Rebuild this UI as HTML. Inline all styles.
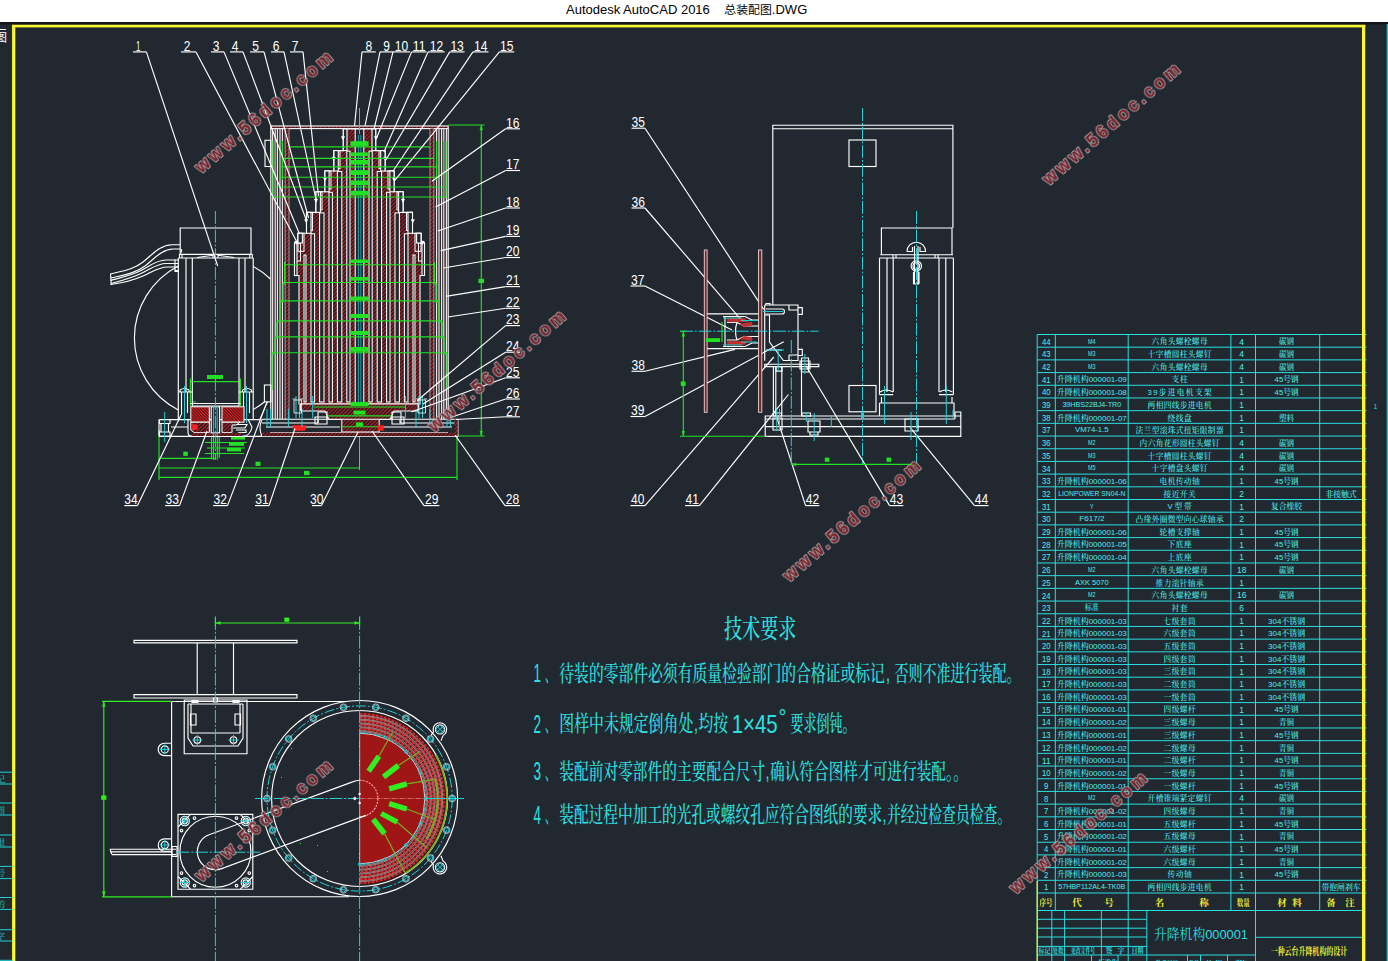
<!DOCTYPE html>
<html lang="zh"><head><meta charset="utf-8"><title>总装配图.DWG</title>
<style>
html,body{margin:0;padding:0;background:#fff;overflow:hidden}
body{width:1388px;height:961px;position:relative;font-family:"Liberation Sans","Noto Sans CJK SC",sans-serif}
#hdr{position:absolute;left:0;top:0;width:1388px;height:22px;background:#fff;color:#000;font-size:13px;line-height:20px;white-space:pre}
#hdr span{position:absolute;left:566px;top:0}
svg{position:absolute;left:0;top:0;display:block}
</style></head><body>
<svg width="1388" height="961" viewBox="0 0 1388 961" font-family="'Liberation Sans','Noto Sans CJK SC',sans-serif">
<defs>
<pattern id="hat" width="2.7" height="2.7" patternUnits="userSpaceOnUse" patternTransform="rotate(-45)"><rect width="2.7" height="2.7" fill="#301a20"/><line x1="0" y1="1.35" x2="2.7" y2="1.35" stroke="#c42626" stroke-width="0.85"/></pattern>
<pattern id="hat2" width="2.2" height="2.2" patternUnits="userSpaceOnUse" patternTransform="rotate(45)"><rect width="2.2" height="2.2" fill="#4a1418"/><line x1="0" y1="1.1" x2="2.2" y2="1.1" stroke="#f02020" stroke-width="1.0"/></pattern>
<pattern id="hat3" width="1.7" height="1.7" patternUnits="userSpaceOnUse" patternTransform="rotate(-45)"><rect width="1.7" height="1.7" fill="#cc1a1a"/><line x1="0" y1="0.85" x2="1.7" y2="0.85" stroke="#5e0e10" stroke-width="0.7"/></pattern>
</defs>
<rect x="0" y="22" width="1388" height="939" fill="#212830"/>
<rect x="0" y="22" width="1388" height="2.5" fill="#12161a"/>
<g fill="#fbf63a" stroke="#3c3c12" stroke-width="0.9" paint-order="stroke"><rect x="12.1" y="24.9" width="1353.1" height="2.3"/><rect x="12.1" y="24.9" width="3.2" height="940"/><rect x="1362" y="24.9" width="3.2" height="940"/></g>
<g fill="#fbf63a"><rect x="12.1" y="24.9" width="1353.1" height="2.3"/></g>
<line x1="1387.3" y1="24.0" x2="1387.3" y2="961.0" stroke="#1fd6d6" stroke-width="1.2" />
<text x="1373.5" y="408.5" font-size="7" fill="#1fd6d6" text-anchor="start" font-family="Liberation Sans" >1</text>
<line x1="0.0" y1="772.2" x2="12.5" y2="772.2" stroke="#1fd6d6" stroke-width="1" />
<line x1="0.0" y1="784.0" x2="12.5" y2="784.0" stroke="#1fd6d6" stroke-width="1" />
<line x1="0.0" y1="803.0" x2="12.5" y2="803.0" stroke="#1fd6d6" stroke-width="1" />
<line x1="0.0" y1="815.0" x2="12.5" y2="815.0" stroke="#1fd6d6" stroke-width="1" />
<line x1="0.0" y1="835.0" x2="12.5" y2="835.0" stroke="#1fd6d6" stroke-width="1" />
<line x1="0.0" y1="847.0" x2="12.5" y2="847.0" stroke="#1fd6d6" stroke-width="1" />
<line x1="0.0" y1="866.4" x2="12.5" y2="866.4" stroke="#1fd6d6" stroke-width="1" />
<line x1="0.0" y1="878.6" x2="12.5" y2="878.6" stroke="#1fd6d6" stroke-width="1" />
<line x1="0.0" y1="897.5" x2="12.5" y2="897.5" stroke="#1fd6d6" stroke-width="1" />
<line x1="0.0" y1="909.4" x2="12.5" y2="909.4" stroke="#1fd6d6" stroke-width="1" />
<line x1="0.0" y1="929.7" x2="12.5" y2="929.7" stroke="#1fd6d6" stroke-width="1" />
<line x1="0.0" y1="941.0" x2="12.5" y2="941.0" stroke="#1fd6d6" stroke-width="1" />
<line x1="0.0" y1="960.3" x2="12.5" y2="960.3" stroke="#1fd6d6" stroke-width="1" />
<text x="-3.0" y="781.5" font-size="8" fill="#1fd6d6" text-anchor="start" font-family="Noto Serif CJK SC, serif" >记</text>
<text x="-3.0" y="812.5" font-size="8" fill="#1fd6d6" text-anchor="start" font-family="Noto Serif CJK SC, serif" >图</text>
<text x="-3.0" y="844.5" font-size="8" fill="#1fd6d6" text-anchor="start" font-family="Noto Serif CJK SC, serif" >限</text>
<text x="-3.0" y="876.1" font-size="8" fill="#1fd6d6" text-anchor="start" font-family="Noto Serif CJK SC, serif" >号</text>
<text x="-3.0" y="906.9" font-size="8" fill="#1fd6d6" text-anchor="start" font-family="Noto Serif CJK SC, serif" >的</text>
<text x="-3.0" y="938.5" font-size="8" fill="#1fd6d6" text-anchor="start" font-family="Noto Serif CJK SC, serif" >字</text>
<text x="-5.0" y="41.5" font-size="12" fill="#fff" text-anchor="start" font-family="Noto Sans CJK SC, sans-serif" >图</text>
<line x1="0.0" y1="29.5" x2="6.0" y2="29.5" stroke="#fff" stroke-width="1" />
<g stroke="#2adfe0" stroke-width="1" fill="none">
<line x1="1037.2" y1="334.50" x2="1366.5" y2="334.50"/>
<line x1="1037.2" y1="347.19" x2="1366.5" y2="347.19"/>
<line x1="1037.2" y1="359.89" x2="1366.5" y2="359.89"/>
<line x1="1037.2" y1="372.58" x2="1366.5" y2="372.58"/>
<line x1="1037.2" y1="385.27" x2="1366.5" y2="385.27"/>
<line x1="1037.2" y1="397.96" x2="1366.5" y2="397.96"/>
<line x1="1037.2" y1="410.66" x2="1366.5" y2="410.66"/>
<line x1="1037.2" y1="423.35" x2="1366.5" y2="423.35"/>
<line x1="1037.2" y1="436.04" x2="1366.5" y2="436.04"/>
<line x1="1037.2" y1="448.74" x2="1366.5" y2="448.74"/>
<line x1="1037.2" y1="461.43" x2="1366.5" y2="461.43"/>
<line x1="1037.2" y1="474.12" x2="1366.5" y2="474.12"/>
<line x1="1037.2" y1="486.82" x2="1366.5" y2="486.82"/>
<line x1="1037.2" y1="499.51" x2="1366.5" y2="499.51"/>
<line x1="1037.2" y1="512.20" x2="1366.5" y2="512.20"/>
<line x1="1037.2" y1="524.89" x2="1366.5" y2="524.89"/>
<line x1="1037.2" y1="537.59" x2="1366.5" y2="537.59"/>
<line x1="1037.2" y1="550.28" x2="1366.5" y2="550.28"/>
<line x1="1037.2" y1="562.97" x2="1366.5" y2="562.97"/>
<line x1="1037.2" y1="575.67" x2="1366.5" y2="575.67"/>
<line x1="1037.2" y1="588.36" x2="1366.5" y2="588.36"/>
<line x1="1037.2" y1="601.05" x2="1366.5" y2="601.05"/>
<line x1="1037.2" y1="613.75" x2="1366.5" y2="613.75"/>
<line x1="1037.2" y1="626.44" x2="1366.5" y2="626.44"/>
<line x1="1037.2" y1="639.13" x2="1366.5" y2="639.13"/>
<line x1="1037.2" y1="651.83" x2="1366.5" y2="651.83"/>
<line x1="1037.2" y1="664.52" x2="1366.5" y2="664.52"/>
<line x1="1037.2" y1="677.21" x2="1366.5" y2="677.21"/>
<line x1="1037.2" y1="689.90" x2="1366.5" y2="689.90"/>
<line x1="1037.2" y1="702.60" x2="1366.5" y2="702.60"/>
<line x1="1037.2" y1="715.29" x2="1366.5" y2="715.29"/>
<line x1="1037.2" y1="727.98" x2="1366.5" y2="727.98"/>
<line x1="1037.2" y1="740.68" x2="1366.5" y2="740.68"/>
<line x1="1037.2" y1="753.37" x2="1366.5" y2="753.37"/>
<line x1="1037.2" y1="766.06" x2="1366.5" y2="766.06"/>
<line x1="1037.2" y1="778.75" x2="1366.5" y2="778.75"/>
<line x1="1037.2" y1="791.45" x2="1366.5" y2="791.45"/>
<line x1="1037.2" y1="804.14" x2="1366.5" y2="804.14"/>
<line x1="1037.2" y1="816.83" x2="1366.5" y2="816.83"/>
<line x1="1037.2" y1="829.53" x2="1366.5" y2="829.53"/>
<line x1="1037.2" y1="842.22" x2="1366.5" y2="842.22"/>
<line x1="1037.2" y1="854.91" x2="1366.5" y2="854.91"/>
<line x1="1037.2" y1="867.61" x2="1366.5" y2="867.61"/>
<line x1="1037.2" y1="880.30" x2="1366.5" y2="880.30"/>
<line x1="1037.2" y1="892.99" x2="1366.5" y2="892.99"/>
<line x1="1037.2" y1="910.5" x2="1362.3" y2="910.5"/>
<line x1="1037.2" y1="334.5" x2="1037.2" y2="910.5"/>
<line x1="1055.3" y1="334.5" x2="1055.3" y2="910.5"/>
<line x1="1128.2" y1="334.5" x2="1128.2" y2="910.5"/>
<line x1="1230.9" y1="334.5" x2="1230.9" y2="910.5"/>
<line x1="1255.5" y1="334.5" x2="1255.5" y2="910.5"/>
<line x1="1319.7" y1="334.5" x2="1319.7" y2="910.5"/>
<line x1="1037.2" y1="910.5" x2="1037.2" y2="961"/>
<line x1="1051.8" y1="910.5" x2="1051.8" y2="961"/>
<line x1="1064.6" y1="910.5" x2="1064.6" y2="961"/>
<line x1="1101.4" y1="910.5" x2="1101.4" y2="961"/>
<line x1="1128.2" y1="910.5" x2="1128.2" y2="961"/>
<line x1="1146.8" y1="910.5" x2="1146.8" y2="961"/>
<line x1="1255.5" y1="910.5" x2="1255.5" y2="961"/>
<line x1="1037.2" y1="919.3" x2="1146.8" y2="919.3"/>
<line x1="1037.2" y1="928.2" x2="1146.8" y2="928.2"/>
<line x1="1037.2" y1="937" x2="1146.8" y2="937"/>
<line x1="1037.2" y1="946.4" x2="1146.8" y2="946.4"/>
<line x1="1037.2" y1="955" x2="1255.5" y2="955"/>
<line x1="1255.5" y1="937.3" x2="1362.3" y2="937.3"/>
<line x1="1187.5" y1="955" x2="1187.5" y2="961"/>
<line x1="1200.5" y1="955" x2="1200.5" y2="961"/>
<line x1="1227.5" y1="955" x2="1227.5" y2="961"/>
<line x1="1091.5" y1="955" x2="1091.5" y2="961"/>
<line x1="1118" y1="955" x2="1118" y2="961"/>
</g>
<path d="M1037.2 881 V961" stroke="#f2f230" stroke-width="1.2" fill="none"/>
<g fill="#4af0f0" font-size="7.7" font-weight="500" text-anchor="middle" style="font-family:'Liberation Sans','Noto Serif CJK SC',serif">
<text x="1046.2" y="344.6" font-size="9.6" textLength="8.6" lengthAdjust="spacingAndGlyphs">44</text>
<text x="1091.8" y="343.5" textLength="7.5" lengthAdjust="spacingAndGlyphs">M4</text>
<text x="1179.6" y="344.3" textLength="56.0" lengthAdjust="spacing">六角头螺栓螺母</text>
<text x="1241.7" y="344.5" font-size="8.4">4</text>
<text x="1286.6" y="344.3" textLength="15" lengthAdjust="spacingAndGlyphs">碳钢</text>
<text x="1046.2" y="357.3" font-size="9.6" textLength="8.6" lengthAdjust="spacingAndGlyphs">43</text>
<text x="1091.8" y="356.2" textLength="7.5" lengthAdjust="spacingAndGlyphs">M3</text>
<text x="1179.6" y="357.0" textLength="64.0" lengthAdjust="spacing">十字槽圆柱头螺钉</text>
<text x="1241.7" y="357.2" font-size="8.4">4</text>
<text x="1286.6" y="357.0" textLength="15" lengthAdjust="spacingAndGlyphs">碳钢</text>
<text x="1046.2" y="370.0" font-size="9.6" textLength="8.6" lengthAdjust="spacingAndGlyphs">42</text>
<text x="1091.8" y="368.9" textLength="7.5" lengthAdjust="spacingAndGlyphs">M3</text>
<text x="1179.6" y="369.7" textLength="56.0" lengthAdjust="spacing">六角头螺栓螺母</text>
<text x="1241.7" y="369.9" font-size="8.4">4</text>
<text x="1286.6" y="369.7" textLength="15" lengthAdjust="spacingAndGlyphs">碳钢</text>
<text x="1046.2" y="382.7" font-size="9.6" textLength="8.6" lengthAdjust="spacingAndGlyphs">41</text>
<text x="1091.8" y="382.4" textLength="70" lengthAdjust="spacingAndGlyphs">升降机构000001-09</text>
<text x="1179.6" y="382.4" textLength="16.0" lengthAdjust="spacing">支柱</text>
<text x="1241.7" y="382.6" font-size="8.4">1</text>
<text x="1286.6" y="382.4" textLength="24" lengthAdjust="spacingAndGlyphs">45号钢</text>
<text x="1046.2" y="395.4" font-size="9.6" textLength="8.6" lengthAdjust="spacingAndGlyphs">40</text>
<text x="1091.8" y="395.1" textLength="70" lengthAdjust="spacingAndGlyphs">升降机构000001-08</text>
<text x="1179.6" y="395.1" textLength="64.0" lengthAdjust="spacing">39步进电机支架</text>
<text x="1241.7" y="395.3" font-size="8.4">1</text>
<text x="1286.6" y="395.1" textLength="24" lengthAdjust="spacingAndGlyphs">45号钢</text>
<text x="1046.2" y="408.1" font-size="9.6" textLength="8.6" lengthAdjust="spacingAndGlyphs">39</text>
<text x="1091.8" y="407.0" textLength="58.8" lengthAdjust="spacingAndGlyphs">39HBS22BJ4-TR0</text>
<text x="1179.6" y="407.8" textLength="64.0" lengthAdjust="spacing">两相四线步进电机</text>
<text x="1241.7" y="408.0" font-size="8.4">1</text>
<text x="1046.2" y="420.8" font-size="9.6" textLength="8.6" lengthAdjust="spacingAndGlyphs">38</text>
<text x="1091.8" y="420.5" textLength="70" lengthAdjust="spacingAndGlyphs">升降机构000001-07</text>
<text x="1179.6" y="420.5" textLength="24.0" lengthAdjust="spacing">绕线盘</text>
<text x="1241.7" y="420.7" font-size="8.4">1</text>
<text x="1286.6" y="420.5" textLength="15" lengthAdjust="spacingAndGlyphs">塑料</text>
<text x="1046.2" y="433.4" font-size="9.6" textLength="8.6" lengthAdjust="spacingAndGlyphs">37</text>
<text x="1091.8" y="432.3" textLength="33.6" lengthAdjust="spacingAndGlyphs">VM74-1.5</text>
<text x="1179.6" y="433.1" textLength="88.0" lengthAdjust="spacing">法兰型滚珠式扭矩限制器</text>
<text x="1241.7" y="433.3" font-size="8.4">1</text>
<text x="1046.2" y="446.1" font-size="9.6" textLength="8.6" lengthAdjust="spacingAndGlyphs">36</text>
<text x="1091.8" y="445.0" textLength="7.5" lengthAdjust="spacingAndGlyphs">M2</text>
<text x="1179.6" y="445.8" textLength="80.0" lengthAdjust="spacing">内六角花形圆柱头螺钉</text>
<text x="1241.7" y="446.0" font-size="8.4">4</text>
<text x="1286.6" y="445.8" textLength="15" lengthAdjust="spacingAndGlyphs">碳钢</text>
<text x="1046.2" y="458.8" font-size="9.6" textLength="8.6" lengthAdjust="spacingAndGlyphs">35</text>
<text x="1091.8" y="457.7" textLength="7.5" lengthAdjust="spacingAndGlyphs">M3</text>
<text x="1179.6" y="458.5" textLength="64.0" lengthAdjust="spacing">十字槽圆柱头螺钉</text>
<text x="1241.7" y="458.7" font-size="8.4">4</text>
<text x="1286.6" y="458.5" textLength="15" lengthAdjust="spacingAndGlyphs">碳钢</text>
<text x="1046.2" y="471.5" font-size="9.6" textLength="8.6" lengthAdjust="spacingAndGlyphs">34</text>
<text x="1091.8" y="470.4" textLength="7.5" lengthAdjust="spacingAndGlyphs">M5</text>
<text x="1179.6" y="471.2" textLength="56.0" lengthAdjust="spacing">十字槽盘头螺钉</text>
<text x="1241.7" y="471.4" font-size="8.4">4</text>
<text x="1286.6" y="471.2" textLength="15" lengthAdjust="spacingAndGlyphs">碳钢</text>
<text x="1046.2" y="484.2" font-size="9.6" textLength="8.6" lengthAdjust="spacingAndGlyphs">33</text>
<text x="1091.8" y="483.9" textLength="70" lengthAdjust="spacingAndGlyphs">升降机构000001-06</text>
<text x="1179.6" y="483.9" textLength="40.0" lengthAdjust="spacing">电机传动轴</text>
<text x="1241.7" y="484.1" font-size="8.4">1</text>
<text x="1286.6" y="483.9" textLength="24" lengthAdjust="spacingAndGlyphs">45号钢</text>
<text x="1046.2" y="496.9" font-size="9.6" textLength="8.6" lengthAdjust="spacingAndGlyphs">32</text>
<text x="1091.8" y="495.8" textLength="67.2" lengthAdjust="spacingAndGlyphs">LIONPOWER SN04-N</text>
<text x="1179.6" y="496.6" textLength="32.0" lengthAdjust="spacing">接近开关</text>
<text x="1241.7" y="496.8" font-size="8.4">2</text>
<text x="1341.0" y="496.6" textLength="31.2" lengthAdjust="spacingAndGlyphs">非接触式</text>
<text x="1046.2" y="509.6" font-size="9.6" textLength="8.6" lengthAdjust="spacingAndGlyphs">31</text>
<text x="1091.8" y="508.5" textLength="3.5" lengthAdjust="spacingAndGlyphs">Y</text>
<text x="1179.6" y="509.3" textLength="24.0" lengthAdjust="spacing">V型带</text>
<text x="1241.7" y="509.5" font-size="8.4">1</text>
<text x="1286.6" y="509.3" textLength="31" lengthAdjust="spacingAndGlyphs">复合橡胶</text>
<text x="1046.2" y="522.3" font-size="9.6" textLength="8.6" lengthAdjust="spacingAndGlyphs">30</text>
<text x="1091.8" y="521.2" textLength="25.2" lengthAdjust="spacingAndGlyphs">F617/2</text>
<text x="1179.6" y="522.0" textLength="88.0" lengthAdjust="spacing">凸缘外圈微型向心球轴承</text>
<text x="1241.7" y="522.2" font-size="8.4">2</text>
<text x="1046.2" y="535.0" font-size="9.6" textLength="8.6" lengthAdjust="spacingAndGlyphs">29</text>
<text x="1091.8" y="534.7" textLength="70" lengthAdjust="spacingAndGlyphs">升降机构000001-06</text>
<text x="1179.6" y="534.7" textLength="40.0" lengthAdjust="spacing">轮槽支撑轴</text>
<text x="1241.7" y="534.9" font-size="8.4">1</text>
<text x="1286.6" y="534.7" textLength="24" lengthAdjust="spacingAndGlyphs">45号钢</text>
<text x="1046.2" y="547.7" font-size="9.6" textLength="8.6" lengthAdjust="spacingAndGlyphs">28</text>
<text x="1091.8" y="547.4" textLength="70" lengthAdjust="spacingAndGlyphs">升降机构000001-05</text>
<text x="1179.6" y="547.4" textLength="24.0" lengthAdjust="spacing">下底座</text>
<text x="1241.7" y="547.6" font-size="8.4">1</text>
<text x="1286.6" y="547.4" textLength="24" lengthAdjust="spacingAndGlyphs">45号钢</text>
<text x="1046.2" y="560.4" font-size="9.6" textLength="8.6" lengthAdjust="spacingAndGlyphs">27</text>
<text x="1091.8" y="560.1" textLength="70" lengthAdjust="spacingAndGlyphs">升降机构000001-04</text>
<text x="1179.6" y="560.1" textLength="24.0" lengthAdjust="spacing">上底座</text>
<text x="1241.7" y="560.3" font-size="8.4">1</text>
<text x="1286.6" y="560.1" textLength="24" lengthAdjust="spacingAndGlyphs">45号钢</text>
<text x="1046.2" y="573.1" font-size="9.6" textLength="8.6" lengthAdjust="spacingAndGlyphs">26</text>
<text x="1091.8" y="572.0" textLength="7.5" lengthAdjust="spacingAndGlyphs">M2</text>
<text x="1179.6" y="572.8" textLength="56.0" lengthAdjust="spacing">六角头螺栓螺母</text>
<text x="1241.7" y="573.0" font-size="8.4">18</text>
<text x="1286.6" y="572.8" textLength="15" lengthAdjust="spacingAndGlyphs">碳钢</text>
<text x="1046.2" y="585.8" font-size="9.6" textLength="8.6" lengthAdjust="spacingAndGlyphs">25</text>
<text x="1091.8" y="584.7" textLength="33.6" lengthAdjust="spacingAndGlyphs">AXK 5070</text>
<text x="1179.6" y="585.5" textLength="48.0" lengthAdjust="spacing">推力滚针轴承</text>
<text x="1241.7" y="585.7" font-size="8.4">1</text>
<text x="1046.2" y="598.5" font-size="9.6" textLength="8.6" lengthAdjust="spacingAndGlyphs">24</text>
<text x="1091.8" y="597.4" textLength="7.5" lengthAdjust="spacingAndGlyphs">M2</text>
<text x="1179.6" y="598.2" textLength="56.0" lengthAdjust="spacing">六角头螺栓螺母</text>
<text x="1241.7" y="598.4" font-size="8.4">16</text>
<text x="1286.6" y="598.2" textLength="15" lengthAdjust="spacingAndGlyphs">碳钢</text>
<text x="1046.2" y="611.1" font-size="9.6" textLength="8.6" lengthAdjust="spacingAndGlyphs">23</text>
<text x="1091.8" y="610.0" textLength="14.0" lengthAdjust="spacingAndGlyphs">标准</text>
<text x="1179.6" y="610.8" textLength="16.0" lengthAdjust="spacing">衬套</text>
<text x="1241.7" y="611.0" font-size="8.4">6</text>
<text x="1046.2" y="623.8" font-size="9.6" textLength="8.6" lengthAdjust="spacingAndGlyphs">22</text>
<text x="1091.8" y="623.5" textLength="70" lengthAdjust="spacingAndGlyphs">升降机构000001-03</text>
<text x="1179.6" y="623.5" textLength="32.0" lengthAdjust="spacing">七级套筒</text>
<text x="1241.7" y="623.7" font-size="8.4">1</text>
<text x="1286.6" y="623.5" textLength="37" lengthAdjust="spacingAndGlyphs">304不锈钢</text>
<text x="1046.2" y="636.5" font-size="9.6" textLength="8.6" lengthAdjust="spacingAndGlyphs">21</text>
<text x="1091.8" y="636.2" textLength="70" lengthAdjust="spacingAndGlyphs">升降机构000001-03</text>
<text x="1179.6" y="636.2" textLength="32.0" lengthAdjust="spacing">六级套筒</text>
<text x="1241.7" y="636.4" font-size="8.4">1</text>
<text x="1286.6" y="636.2" textLength="37" lengthAdjust="spacingAndGlyphs">304不锈钢</text>
<text x="1046.2" y="649.2" font-size="9.6" textLength="8.6" lengthAdjust="spacingAndGlyphs">20</text>
<text x="1091.8" y="648.9" textLength="70" lengthAdjust="spacingAndGlyphs">升降机构000001-03</text>
<text x="1179.6" y="648.9" textLength="32.0" lengthAdjust="spacing">五级套筒</text>
<text x="1241.7" y="649.1" font-size="8.4">1</text>
<text x="1286.6" y="648.9" textLength="37" lengthAdjust="spacingAndGlyphs">304不锈钢</text>
<text x="1046.2" y="661.9" font-size="9.6" textLength="8.6" lengthAdjust="spacingAndGlyphs">19</text>
<text x="1091.8" y="661.6" textLength="70" lengthAdjust="spacingAndGlyphs">升降机构000001-03</text>
<text x="1179.6" y="661.6" textLength="32.0" lengthAdjust="spacing">四级套筒</text>
<text x="1241.7" y="661.8" font-size="8.4">1</text>
<text x="1286.6" y="661.6" textLength="37" lengthAdjust="spacingAndGlyphs">304不锈钢</text>
<text x="1046.2" y="674.6" font-size="9.6" textLength="8.6" lengthAdjust="spacingAndGlyphs">18</text>
<text x="1091.8" y="674.3" textLength="70" lengthAdjust="spacingAndGlyphs">升降机构000001-03</text>
<text x="1179.6" y="674.3" textLength="32.0" lengthAdjust="spacing">三级套筒</text>
<text x="1241.7" y="674.5" font-size="8.4">1</text>
<text x="1286.6" y="674.3" textLength="37" lengthAdjust="spacingAndGlyphs">304不锈钢</text>
<text x="1046.2" y="687.3" font-size="9.6" textLength="8.6" lengthAdjust="spacingAndGlyphs">17</text>
<text x="1091.8" y="687.0" textLength="70" lengthAdjust="spacingAndGlyphs">升降机构000001-03</text>
<text x="1179.6" y="687.0" textLength="32.0" lengthAdjust="spacing">二级套筒</text>
<text x="1241.7" y="687.2" font-size="8.4">1</text>
<text x="1286.6" y="687.0" textLength="37" lengthAdjust="spacingAndGlyphs">304不锈钢</text>
<text x="1046.2" y="700.0" font-size="9.6" textLength="8.6" lengthAdjust="spacingAndGlyphs">16</text>
<text x="1091.8" y="699.7" textLength="70" lengthAdjust="spacingAndGlyphs">升降机构000001-03</text>
<text x="1179.6" y="699.7" textLength="32.0" lengthAdjust="spacing">一级套筒</text>
<text x="1241.7" y="699.9" font-size="8.4">1</text>
<text x="1286.6" y="699.7" textLength="37" lengthAdjust="spacingAndGlyphs">304不锈钢</text>
<text x="1046.2" y="712.7" font-size="9.6" textLength="8.6" lengthAdjust="spacingAndGlyphs">15</text>
<text x="1091.8" y="712.4" textLength="70" lengthAdjust="spacingAndGlyphs">升降机构000001-01</text>
<text x="1179.6" y="712.4" textLength="32.0" lengthAdjust="spacing">四级螺杆</text>
<text x="1241.7" y="712.6" font-size="8.4">1</text>
<text x="1286.6" y="712.4" textLength="24" lengthAdjust="spacingAndGlyphs">45号钢</text>
<text x="1046.2" y="725.4" font-size="9.6" textLength="8.6" lengthAdjust="spacingAndGlyphs">14</text>
<text x="1091.8" y="725.1" textLength="70" lengthAdjust="spacingAndGlyphs">升降机构000001-02</text>
<text x="1179.6" y="725.1" textLength="32.0" lengthAdjust="spacing">三级螺母</text>
<text x="1241.7" y="725.3" font-size="8.4">1</text>
<text x="1286.6" y="725.1" textLength="15" lengthAdjust="spacingAndGlyphs">青铜</text>
<text x="1046.2" y="738.1" font-size="9.6" textLength="8.6" lengthAdjust="spacingAndGlyphs">13</text>
<text x="1091.8" y="737.8" textLength="70" lengthAdjust="spacingAndGlyphs">升降机构000001-01</text>
<text x="1179.6" y="737.8" textLength="32.0" lengthAdjust="spacing">三级螺杆</text>
<text x="1241.7" y="738.0" font-size="8.4">1</text>
<text x="1286.6" y="737.8" textLength="24" lengthAdjust="spacingAndGlyphs">45号钢</text>
<text x="1046.2" y="750.8" font-size="9.6" textLength="8.6" lengthAdjust="spacingAndGlyphs">12</text>
<text x="1091.8" y="750.5" textLength="70" lengthAdjust="spacingAndGlyphs">升降机构000001-02</text>
<text x="1179.6" y="750.5" textLength="32.0" lengthAdjust="spacing">二级螺母</text>
<text x="1241.7" y="750.7" font-size="8.4">1</text>
<text x="1286.6" y="750.5" textLength="15" lengthAdjust="spacingAndGlyphs">青铜</text>
<text x="1046.2" y="763.5" font-size="9.6" textLength="8.6" lengthAdjust="spacingAndGlyphs">11</text>
<text x="1091.8" y="763.2" textLength="70" lengthAdjust="spacingAndGlyphs">升降机构000001-01</text>
<text x="1179.6" y="763.2" textLength="32.0" lengthAdjust="spacing">二级螺杆</text>
<text x="1241.7" y="763.4" font-size="8.4">1</text>
<text x="1286.6" y="763.2" textLength="24" lengthAdjust="spacingAndGlyphs">45号钢</text>
<text x="1046.2" y="776.2" font-size="9.6" textLength="8.6" lengthAdjust="spacingAndGlyphs">10</text>
<text x="1091.8" y="775.9" textLength="70" lengthAdjust="spacingAndGlyphs">升降机构000001-02</text>
<text x="1179.6" y="775.9" textLength="32.0" lengthAdjust="spacing">一级螺母</text>
<text x="1241.7" y="776.1" font-size="8.4">1</text>
<text x="1286.6" y="775.9" textLength="15" lengthAdjust="spacingAndGlyphs">青铜</text>
<text x="1046.2" y="788.8" font-size="9.6" textLength="4.3" lengthAdjust="spacingAndGlyphs">9</text>
<text x="1091.8" y="788.5" textLength="70" lengthAdjust="spacingAndGlyphs">升降机构000001-01</text>
<text x="1179.6" y="788.5" textLength="32.0" lengthAdjust="spacing">一级螺杆</text>
<text x="1241.7" y="788.7" font-size="8.4">1</text>
<text x="1286.6" y="788.5" textLength="24" lengthAdjust="spacingAndGlyphs">45号钢</text>
<text x="1046.2" y="801.5" font-size="9.6" textLength="4.3" lengthAdjust="spacingAndGlyphs">8</text>
<text x="1091.8" y="800.4" textLength="7.5" lengthAdjust="spacingAndGlyphs">M2</text>
<text x="1179.6" y="801.2" textLength="64.0" lengthAdjust="spacing">开槽锥端紧定螺钉</text>
<text x="1241.7" y="801.4" font-size="8.4">4</text>
<text x="1286.6" y="801.2" textLength="15" lengthAdjust="spacingAndGlyphs">碳钢</text>
<text x="1046.2" y="814.2" font-size="9.6" textLength="4.3" lengthAdjust="spacingAndGlyphs">7</text>
<text x="1091.8" y="813.9" textLength="70" lengthAdjust="spacingAndGlyphs">升降机构000001-02</text>
<text x="1179.6" y="813.9" textLength="32.0" lengthAdjust="spacing">四级螺母</text>
<text x="1241.7" y="814.1" font-size="8.4">1</text>
<text x="1286.6" y="813.9" textLength="15" lengthAdjust="spacingAndGlyphs">青铜</text>
<text x="1046.2" y="826.9" font-size="9.6" textLength="4.3" lengthAdjust="spacingAndGlyphs">6</text>
<text x="1091.8" y="826.6" textLength="70" lengthAdjust="spacingAndGlyphs">升降机构000001-01</text>
<text x="1179.6" y="826.6" textLength="32.0" lengthAdjust="spacing">五级螺杆</text>
<text x="1241.7" y="826.8" font-size="8.4">1</text>
<text x="1286.6" y="826.6" textLength="24" lengthAdjust="spacingAndGlyphs">45号钢</text>
<text x="1046.2" y="839.6" font-size="9.6" textLength="4.3" lengthAdjust="spacingAndGlyphs">5</text>
<text x="1091.8" y="839.3" textLength="70" lengthAdjust="spacingAndGlyphs">升降机构000001-02</text>
<text x="1179.6" y="839.3" textLength="32.0" lengthAdjust="spacing">五级螺母</text>
<text x="1241.7" y="839.5" font-size="8.4">1</text>
<text x="1286.6" y="839.3" textLength="15" lengthAdjust="spacingAndGlyphs">青铜</text>
<text x="1046.2" y="852.3" font-size="9.6" textLength="4.3" lengthAdjust="spacingAndGlyphs">4</text>
<text x="1091.8" y="852.0" textLength="70" lengthAdjust="spacingAndGlyphs">升降机构000001-01</text>
<text x="1179.6" y="852.0" textLength="32.0" lengthAdjust="spacing">六级螺杆</text>
<text x="1241.7" y="852.2" font-size="8.4">1</text>
<text x="1286.6" y="852.0" textLength="24" lengthAdjust="spacingAndGlyphs">45号钢</text>
<text x="1046.2" y="865.0" font-size="9.6" textLength="4.3" lengthAdjust="spacingAndGlyphs">3</text>
<text x="1091.8" y="864.7" textLength="70" lengthAdjust="spacingAndGlyphs">升降机构000001-02</text>
<text x="1179.6" y="864.7" textLength="32.0" lengthAdjust="spacing">六级螺母</text>
<text x="1241.7" y="864.9" font-size="8.4">1</text>
<text x="1286.6" y="864.7" textLength="15" lengthAdjust="spacingAndGlyphs">青铜</text>
<text x="1046.2" y="877.7" font-size="9.6" textLength="4.3" lengthAdjust="spacingAndGlyphs">2</text>
<text x="1091.8" y="877.4" textLength="70" lengthAdjust="spacingAndGlyphs">升降机构000001-03</text>
<text x="1179.6" y="877.4" textLength="24.0" lengthAdjust="spacing">传动轴</text>
<text x="1241.7" y="877.6" font-size="8.4">1</text>
<text x="1286.6" y="877.4" textLength="24" lengthAdjust="spacingAndGlyphs">45号钢</text>
<text x="1046.2" y="890.4" font-size="9.6" textLength="4.3" lengthAdjust="spacingAndGlyphs">1</text>
<text x="1091.8" y="889.3" textLength="67.2" lengthAdjust="spacingAndGlyphs">57HBP112AL4-TK0B</text>
<text x="1179.6" y="890.1" textLength="64.0" lengthAdjust="spacing">两相四线步进电机</text>
<text x="1241.7" y="890.3" font-size="8.4">1</text>
<text x="1341.0" y="890.1" textLength="39.0" lengthAdjust="spacingAndGlyphs">带抱闸刹车</text>
</g>
<g fill="#f2f230" font-size="9" font-weight="bold" text-anchor="middle" style="font-family:'Noto Serif CJK SC',serif">
<text x="1046" y="905.8" textLength="13" lengthAdjust="spacingAndGlyphs">序号</text>
<text x="1077" y="905.8" font-size="9.5">代</text><text x="1109" y="905.8" font-size="9.5">号</text>
<text x="1159.5" y="905.8" font-size="9.5">名</text><text x="1204" y="905.8" font-size="9.5">称</text>
<text x="1243.3" y="905.8" textLength="13" lengthAdjust="spacingAndGlyphs">数量</text>
<text x="1282" y="905.8" font-size="9.5">材</text><text x="1297" y="905.8" font-size="9.5">料</text>
<text x="1331" y="905.8" font-size="9.5">备</text><text x="1350" y="905.8" font-size="9.5">注</text>
</g>
<g fill="#2adfe0" font-size="9" font-weight="bold" text-anchor="middle" style="font-family:'Noto Serif CJK SC',serif">
<text x="1044.5" y="953.3" font-size="7" textLength="12" lengthAdjust="spacingAndGlyphs">标记</text>
<text x="1058" y="953.3" font-size="7" textLength="11" lengthAdjust="spacingAndGlyphs">处数</text>
<text x="1083" y="953.3" font-size="7" textLength="24" lengthAdjust="spacingAndGlyphs">更改文件号</text>
<text x="1109" y="953.3" font-size="7">签</text><text x="1121" y="953.3" font-size="7">字</text>
<text x="1137.5" y="953.3" font-size="7" textLength="12" lengthAdjust="spacingAndGlyphs">日期</text>
<text x="1108" y="965" font-size="6.5">标准化</text>
<text x="1167" y="966" font-size="7" textLength="22" lengthAdjust="spacingAndGlyphs">阶段标记</text>
<text x="1194" y="966" font-size="7" textLength="10" lengthAdjust="spacingAndGlyphs">数量</text>
<text x="1214" y="966" font-size="7" textLength="16" lengthAdjust="spacing">比例</text>
<text x="1241" y="966" font-size="7" textLength="12" lengthAdjust="spacing">张次</text>
</g>
<text x="1308.9" y="955.4" font-size="10.5" font-weight="bold" fill="#f2f230" text-anchor="middle" textLength="76.4" lengthAdjust="spacingAndGlyphs" style="font-family:'Noto Serif CJK SC',serif">一种云台升降机构的设计</text>
<text x="1154" y="939.3" font-size="13.2" fill="#2adfe0" textLength="94" lengthAdjust="spacingAndGlyphs" style="font-family:'Liberation Sans','Noto Serif CJK SC',serif">升降机构000001</text>
<g fill="#2ce0e0" style="font-family:'Liberation Sans','Noto Serif CJK SC',serif" font-weight="500">
<text x="724" y="637.5" font-size="26" textLength="72.5" lengthAdjust="spacingAndGlyphs">技术要求</text>
<text x="533.5" y="682.0" font-size="25" textLength="7.5" lengthAdjust="spacingAndGlyphs">1</text>
<text x="545" y="680.5" font-size="21.3" textLength="10" lengthAdjust="spacingAndGlyphs">、</text>
<text x="533.5" y="732.5" font-size="25" textLength="7.5" lengthAdjust="spacingAndGlyphs">2</text>
<text x="545" y="731" font-size="21.3" textLength="10" lengthAdjust="spacingAndGlyphs">、</text>
<text x="533.5" y="780.0" font-size="25" textLength="7.5" lengthAdjust="spacingAndGlyphs">3</text>
<text x="545" y="778.5" font-size="21.3" textLength="10" lengthAdjust="spacingAndGlyphs">、</text>
<text x="533.5" y="823.5" font-size="25" textLength="7.5" lengthAdjust="spacingAndGlyphs">4</text>
<text x="545" y="822" font-size="21.3" textLength="10" lengthAdjust="spacingAndGlyphs">、</text>
<text x="559.3" y="680.5" font-size="21.3" textLength="325.5" lengthAdjust="spacingAndGlyphs">待装的零部件必须有质量检验部门的合格证或标记</text>
<text x="886" y="680.5" font-size="21.3" textLength="4" lengthAdjust="spacingAndGlyphs">,</text>
<text x="894.5" y="680.5" font-size="21.3" textLength="126" lengthAdjust="spacingAndGlyphs">否则不准进行装配。</text>
<text x="559.3" y="731" font-size="21.3" textLength="134" lengthAdjust="spacingAndGlyphs">图样中未规定倒角处</text>
<text x="694" y="731" font-size="21.3" textLength="4" lengthAdjust="spacingAndGlyphs">,</text>
<text x="698.5" y="731" font-size="21.3" textLength="29.5" lengthAdjust="spacingAndGlyphs">均按</text>
<text x="731.7" y="732.5" font-size="26" textLength="46" lengthAdjust="spacingAndGlyphs">1×45</text>
<text x="778.5" y="725" font-size="22" textLength="8" lengthAdjust="spacingAndGlyphs">°</text>
<text x="790.5" y="731" font-size="21.3" textLength="65" lengthAdjust="spacingAndGlyphs">要求倒钝。</text>
<text x="559.3" y="778.5" font-size="21.3" textLength="206" lengthAdjust="spacingAndGlyphs">装配前对零部件的主要配合尺寸</text>
<text x="765.5" y="778.5" font-size="21.3" textLength="4" lengthAdjust="spacingAndGlyphs">,</text>
<text x="770" y="778.5" font-size="21.3" textLength="198" lengthAdjust="spacingAndGlyphs">确认符合图样才可进行装配。。</text>
<text x="559.3" y="822" font-size="21.3" textLength="323" lengthAdjust="spacingAndGlyphs">装配过程中加工的光孔或螺纹孔应符合图纸的要求</text>
<text x="882.5" y="822" font-size="21.3" textLength="4" lengthAdjust="spacingAndGlyphs">,</text>
<text x="887" y="822" font-size="21.3" textLength="124" lengthAdjust="spacingAndGlyphs">并经过检查员检查。</text>
</g>
<rect x="270.8" y="126.0" width="177.4" height="2.6" stroke="#ffffff" fill="url(#hat)" stroke-width="1.1" />
<line x1="270.8" y1="128.6" x2="270.8" y2="419.0" stroke="#ffffff" stroke-width="1.15" />
<line x1="272.6" y1="128.6" x2="272.6" y2="419.0" stroke="#ffffff" stroke-width="1.15" />
<line x1="275.2" y1="128.6" x2="275.2" y2="419.0" stroke="#ffffff" stroke-width="1.15" />
<line x1="277.4" y1="128.6" x2="277.4" y2="419.0" stroke="#ffffff" stroke-width="1.15" />
<line x1="280.0" y1="128.6" x2="280.0" y2="419.0" stroke="#ffffff" stroke-width="1.15" />
<line x1="282.4" y1="128.6" x2="282.4" y2="419.0" stroke="#ffffff" stroke-width="1.15" />
<line x1="285.4" y1="128.6" x2="285.4" y2="419.0" stroke="#ffffff" stroke-width="1.15" />
<line x1="288.7" y1="128.6" x2="288.7" y2="419.0" stroke="#ffffff" stroke-width="1.15" />
<rect x="270.8" y="128.6" width="17.9" height="290" fill="#a04848" opacity="0.12"/>
<rect x="285.4" y="128.6" width="3.3" height="290" fill="url(#hat)"/>
<line x1="448.2" y1="128.6" x2="448.2" y2="419.0" stroke="#ffffff" stroke-width="1.15" />
<line x1="446.4" y1="128.6" x2="446.4" y2="419.0" stroke="#ffffff" stroke-width="1.15" />
<line x1="443.8" y1="128.6" x2="443.8" y2="419.0" stroke="#ffffff" stroke-width="1.15" />
<line x1="441.6" y1="128.6" x2="441.6" y2="419.0" stroke="#ffffff" stroke-width="1.15" />
<line x1="439.0" y1="128.6" x2="439.0" y2="419.0" stroke="#ffffff" stroke-width="1.15" />
<line x1="436.6" y1="128.6" x2="436.6" y2="419.0" stroke="#ffffff" stroke-width="1.15" />
<line x1="433.6" y1="128.6" x2="433.6" y2="419.0" stroke="#ffffff" stroke-width="1.15" />
<line x1="430.3" y1="128.6" x2="430.3" y2="419.0" stroke="#ffffff" stroke-width="1.15" />
<rect x="430.3" y="128.6" width="17.9" height="290" fill="#a04848" opacity="0.12"/>
<rect x="430.3" y="128.6" width="3.3" height="290" fill="url(#hat)"/>
<path d="M299.0 404.0 L299.0 275.5 L294.5 275.5 L294.5 243.0 L298.0 243.0 L298.0 233.3 L306.5 233.3 L306.5 212.4 L316.0 212.4 L316.0 191.8 L325.0 191.8 L325.0 171.0 L334.0 171.0 L334.0 150.6 L343.3 150.6 L343.3 129.0 L375.7 129.0 L375.7 150.6 L385.0 150.6 L385.0 171.0 L394.0 171.0 L394.0 191.8 L403.0 191.8 L403.0 212.4 L412.5 212.4 L412.5 233.3 L421.0 233.3 L421.0 243.0 L424.5 243.0 L424.5 275.5 L420.0 275.5 L420.0 404.0 Z" stroke="#ffffff" fill="url(#hat)" stroke-width="1.1" />
<rect x="346.8" y="151.1" width="3.2" height="250.9" stroke="#ffffff" fill="#212830" stroke-width="1.05" />
<rect x="369.0" y="151.1" width="3.2" height="250.9" stroke="#ffffff" fill="#212830" stroke-width="1.05" />
<rect x="337.4" y="171.5" width="4.4" height="230.5" stroke="#ffffff" fill="#212830" stroke-width="1.05" />
<rect x="377.2" y="171.5" width="4.4" height="230.5" stroke="#ffffff" fill="#212830" stroke-width="1.05" />
<rect x="329.0" y="192.3" width="3.4" height="209.7" stroke="#ffffff" fill="#212830" stroke-width="1.05" />
<rect x="386.6" y="192.3" width="3.4" height="209.7" stroke="#ffffff" fill="#212830" stroke-width="1.05" />
<rect x="319.6" y="212.9" width="4.4" height="189.1" stroke="#ffffff" fill="#212830" stroke-width="1.05" />
<rect x="395.0" y="212.9" width="4.4" height="189.1" stroke="#ffffff" fill="#212830" stroke-width="1.05" />
<rect x="311.0" y="233.8" width="3.6" height="168.2" stroke="#ffffff" fill="#212830" stroke-width="1.05" />
<rect x="404.4" y="233.8" width="3.6" height="168.2" stroke="#ffffff" fill="#212830" stroke-width="1.05" />
<rect x="304.0" y="255.0" width="2.0" height="147.0" stroke="#ffffff" fill="#212830" stroke-width="1.05" />
<rect x="413.0" y="255.0" width="2.0" height="147.0" stroke="#ffffff" fill="#212830" stroke-width="1.05" />
<rect x="334.0" y="150.6" width="6.0" height="18.0" stroke="#ffffff" fill="none" stroke-width="1.0" />
<rect x="379.0" y="150.6" width="6.0" height="18.0" stroke="#ffffff" fill="none" stroke-width="1.0" />
<rect x="325.0" y="171.0" width="6.0" height="18.0" stroke="#ffffff" fill="none" stroke-width="1.0" />
<rect x="388.0" y="171.0" width="6.0" height="18.0" stroke="#ffffff" fill="none" stroke-width="1.0" />
<rect x="316.0" y="191.8" width="6.0" height="18.0" stroke="#ffffff" fill="none" stroke-width="1.0" />
<rect x="397.0" y="191.8" width="6.0" height="18.0" stroke="#ffffff" fill="none" stroke-width="1.0" />
<rect x="306.5" y="212.4" width="6.0" height="18.0" stroke="#ffffff" fill="none" stroke-width="1.0" />
<rect x="406.5" y="212.4" width="6.0" height="18.0" stroke="#ffffff" fill="none" stroke-width="1.0" />
<rect x="298.0" y="233.3" width="6.0" height="18.0" stroke="#ffffff" fill="none" stroke-width="1.0" />
<rect x="415.0" y="233.3" width="6.0" height="18.0" stroke="#ffffff" fill="none" stroke-width="1.0" />
<rect x="294.5" y="243.0" width="6.0" height="18.0" stroke="#ffffff" fill="none" stroke-width="1.0" />
<rect x="418.5" y="243.0" width="6.0" height="18.0" stroke="#ffffff" fill="none" stroke-width="1.0" />
<rect x="343.3" y="129.0" width="3.7" height="21.6" stroke="#ffffff" fill="#212830" stroke-width="1.1" />
<rect x="372.0" y="129.0" width="3.7" height="21.6" stroke="#ffffff" fill="#212830" stroke-width="1.1" />
<rect x="334.0" y="150.6" width="4.3" height="20.4" stroke="#ffffff" fill="#212830" stroke-width="1.1" />
<rect x="380.7" y="150.6" width="4.3" height="20.4" stroke="#ffffff" fill="#212830" stroke-width="1.1" />
<rect x="325.0" y="171.0" width="4.1" height="20.8" stroke="#ffffff" fill="#212830" stroke-width="1.1" />
<rect x="389.9" y="171.0" width="4.1" height="20.8" stroke="#ffffff" fill="#212830" stroke-width="1.1" />
<rect x="316.0" y="191.8" width="4.4" height="20.6" stroke="#ffffff" fill="#212830" stroke-width="1.1" />
<rect x="398.6" y="191.8" width="4.4" height="20.6" stroke="#ffffff" fill="#212830" stroke-width="1.1" />
<rect x="306.5" y="212.4" width="4.5" height="20.9" stroke="#ffffff" fill="#212830" stroke-width="1.1" />
<rect x="408.0" y="212.4" width="4.5" height="20.9" stroke="#ffffff" fill="#212830" stroke-width="1.1" />
<rect x="298.0" y="233.3" width="4.4" height="9.7" stroke="#ffffff" fill="#212830" stroke-width="1.1" />
<rect x="416.6" y="233.3" width="4.4" height="9.7" stroke="#ffffff" fill="#212830" stroke-width="1.1" />
<rect x="294.5" y="243.0" width="2.5" height="32.5" stroke="#ffffff" fill="#212830" stroke-width="1.1" />
<rect x="422.0" y="243.0" width="2.5" height="32.5" stroke="#ffffff" fill="#212830" stroke-width="1.1" />
<path d="M294.6 241.0 L298.2 241.0 L296.4 244.6 Z" stroke="#ffffff" fill="#ffffff" stroke-width="0.3" />
<path d="M420.8 241.0 L424.4 241.0 L422.6 244.6 Z" stroke="#ffffff" fill="#ffffff" stroke-width="0.3" />
<path d="M304.4 219.5 L308.0 219.5 L306.2 223.1 Z" stroke="#ffffff" fill="#ffffff" stroke-width="0.3" />
<path d="M411.0 219.5 L414.6 219.5 L412.8 223.1 Z" stroke="#ffffff" fill="#ffffff" stroke-width="0.3" />
<path d="M314.2 199.0 L317.8 199.0 L316.0 202.6 Z" stroke="#ffffff" fill="#ffffff" stroke-width="0.3" />
<path d="M401.2 199.0 L404.8 199.0 L403.0 202.6 Z" stroke="#ffffff" fill="#ffffff" stroke-width="0.3" />
<path d="M323.2 177.5 L326.8 177.5 L325.0 181.1 Z" stroke="#ffffff" fill="#ffffff" stroke-width="0.3" />
<path d="M392.2 177.5 L395.8 177.5 L394.0 181.1 Z" stroke="#ffffff" fill="#ffffff" stroke-width="0.3" />
<path d="M331.9 157.0 L335.5 157.0 L333.7 160.6 Z" stroke="#ffffff" fill="#ffffff" stroke-width="0.3" />
<path d="M383.5 157.0 L387.1 157.0 L385.3 160.6 Z" stroke="#ffffff" fill="#ffffff" stroke-width="0.3" />
<path d="M341.2 136.5 L344.8 136.5 L343.0 140.1 Z" stroke="#ffffff" fill="#ffffff" stroke-width="0.3" />
<path d="M374.2 136.5 L377.8 136.5 L376.0 140.1 Z" stroke="#ffffff" fill="#ffffff" stroke-width="0.3" />
<rect x="355.2" y="129.0" width="8.6" height="275.0" stroke="#ffffff" fill="#212830" stroke-width="1.05" />
<line x1="358.4" y1="135.0" x2="358.4" y2="404.0" stroke="#22d0d8" stroke-width="0.7" />
<line x1="360.8" y1="135.0" x2="360.8" y2="404.0" stroke="#22d0d8" stroke-width="0.7" />
<line x1="359.5" y1="108.0" x2="359.5" y2="134.0" stroke="#22d0d8" stroke-width="1" />
<line x1="359.5" y1="404.0" x2="359.5" y2="470.0" stroke="#22d0d8" stroke-width="1" />
<g stroke="#22e022" stroke-width="1.15" fill="none">
<path d="M290 146.8 H430"/>
<path d="M284 158.4 H434"/>
<path d="M281.5 166.9 H437.5"/>
<path d="M279 177.2 H440"/>
<path d="M276 187 H443"/>
<path d="M272.5 197 H446.5"/>
<path d="M284.6 264.7 H434.5"/>
<path d="M283 282.5 H436"/>
<path d="M280 300.8 H439.5"/>
<path d="M277 320.9 H442"/>
<path d="M275 336.8 H444"/>
<path d="M272 352.7 H447"/>
<path d="M273 141 V197"/><path d="M446.0 141 V197"/>
<path d="M275.5 141 V197"/><path d="M443.5 141 V197"/>
<path d="M279.5 141 V180"/><path d="M439.5 141 V180"/>
<path d="M282.5 141 V180"/><path d="M436.5 141 V180"/>
<path d="M284.6 262 V284 L283 284 V302 L280 302 V322 L277 322 V338 L275 338 V354 L272 354 V390"/>
<path d="M434.4 262 L434.4 284 L436.0 284 L436.0 302 L439.0 302 L439.0 322 L442.0 322 L442.0 338 L444.0 338 L444.0 354 L447.0 354 L447.0 390"/>
<path d="M448.5 125 H484.5 M481.3 125 V436 M457 436 H484.5 M457 436 V480 M159 477.3 H457 M159 468 H359 M159 458.3 H215.4 M159 430 V480"/>
<path d="M313.7 407 H405.4 M327.7 415.8 H392.3 M341.8 426.7 H379.2"/>
<path d="M190.4 381.6 H240.4 M190.4 378.5 V406 M240.4 378.5 V406"/>
<path d="M211.5 436 V458 M213.5 436 V460 M217.3 436 V460 M219.3 436 V458 M205 442.5 H247 M207 448 H245 M205 453.5 H244"/>
</g>
<path d="M481.3 125.0 L479.8 130.0 L482.8 130.0 Z" stroke="#22e022" fill="#22e022" stroke-width="0.3" />
<path d="M481.3 436.0 L479.8 431.0 L482.8 431.0 Z" stroke="#22e022" fill="#22e022" stroke-width="0.3" />
<rect x="350.4" y="141.2" width="18.2" height="4.7" fill="#22e022"/>
<rect x="350.4" y="152.4" width="18.2" height="3.8" fill="#22e022"/>
<rect x="350.4" y="160" width="18.2" height="4.6" fill="#22e022"/>
<rect x="350.4" y="170.2" width="18.2" height="4.8" fill="#22e022"/>
<rect x="350.4" y="180.5" width="18.2" height="4.7" fill="#22e022"/>
<rect x="350.4" y="190.8" width="18.2" height="4.7" fill="#22e022"/>
<rect x="350.4" y="259.5" width="18.2" height="3.5" fill="#22e022"/>
<rect x="350.4" y="277" width="18.2" height="3.6" fill="#22e022"/>
<rect x="350.4" y="296.5" width="18.2" height="3.5" fill="#22e022"/>
<rect x="350.4" y="314" width="18.2" height="4.0" fill="#22e022"/>
<rect x="350.4" y="331" width="18.2" height="4.0" fill="#22e022"/>
<rect x="350.4" y="347" width="18.2" height="4.8" fill="#22e022"/>
<rect x="353.5" y="402" width="12" height="4.0" fill="#22e022"/>
<rect x="353.5" y="410.6" width="12" height="4.0" fill="#22e022"/>
<rect x="356.0" y="422.4" width="7" height="4.0" fill="#22e022"/>
<rect x="478.5" y="278.8" width="5.5" height="4.2" fill="#22e022"/>
<rect x="183.3" y="451.7" width="4.5" height="4.2" fill="#22e022"/>
<rect x="255.5" y="461.7" width="5" height="4.2" fill="#22e022"/>
<rect x="304" y="470.9" width="5.5" height="4.2" fill="#22e022"/>
<rect x="207" y="375" width="16" height="4" fill="#22e022"/>
<rect x="231" y="436" width="14" height="3.6" fill="#22e022"/>
<rect x="229" y="442" width="15" height="3.8" fill="#22e022"/>
<rect x="227" y="447.8" width="14" height="3.6" fill="#22e022"/>
<path d="M300.6 404.0 L418.5 404.0 L418.5 411.0 L394.0 411.0 L390.0 419.5 L379.2 419.5 L379.2 432.0 L341.8 432.0 L341.8 419.5 L329.0 419.5 L325.0 411.0 L300.6 411.0 Z" stroke="#ffffff" fill="url(#hat)" stroke-width="1.0" />
<g stroke="#22e022" stroke-width="1.15"><path d="M313.7 407 H405.4 M327.7 415.8 H392.3 M341.8 426.7 H379.2"/></g>
<rect x="350.5" y="402" width="18" height="4.0" fill="#22e022"/>
<rect x="353.5" y="410.6" width="12" height="4.0" fill="#22e022"/>
<rect x="356.0" y="422.4" width="7" height="4.0" fill="#22e022"/>
<g stroke="#ffffff" stroke-width="1.1" fill="none">
<path d="M262 419.2 H457.9 V436.2 H259.5 M262 419.2 Q258 428 262 436.2"/>
<path d="M262 423 H318 V419.2 M400 419.2 V423 H455 M266 427 H340 M380 427 H452 M270 432.5 H448"/>
<path d="M318 412 H327 V419 M392 419 V412 H401 M318 412 V423 M401 412 V423"/>
<path d="M315 417 H327 V424 H315 Z M392 417 H404 V424 H392 Z"/>
</g>
<rect x="262.0" y="432.6" width="195.5" height="3.4" stroke="none" fill="url(#hat)" stroke-width="0" />
<rect x="454.5" y="419.5" width="3.2" height="14.0" stroke="none" fill="url(#hat)" stroke-width="0" />
<path d="M292.7 425.4 L306.2 425.4 L305.0 430.4 L294.0 430.4 Z" stroke="#ff2020" fill="#ff2020" stroke-width="0.5" />
<path d="M377.5 425.4 L383.3 425.4 L383.3 430.4 L378.5 430.4 Z" stroke="#ff2020" fill="#ff2020" stroke-width="0.5" />
<g stroke="#22d0d8" stroke-width="1" fill="none">
<path d="M296 396 V418"/>
<path d="M299.5 396 V418"/>
<path d="M312.7 396 V418"/>
<path d="M405.4 396 V418"/>
<path d="M419 396 V418"/>
<path d="M422.5 396 V418"/>
<path d="M267 409 V427"/>
<path d="M270.5 409 V427"/>
<path d="M288.4 409 V427"/>
<path d="M302 409 V427"/>
<path d="M416 409 V427"/>
<path d="M429.8 409 V427"/>
<path d="M447 409 V427"/>
<path d="M450.5 409 V427"/>
</g>
<g stroke="#ffffff" stroke-width="0.8" fill="none">
<path d="M294 400 h7.5 v13 h-7.5 z M292.5 399 h3 M300 399 h3"/>
<path d="M418 400 h7.5 v13 h-7.5 z M416.5 399 h3 M424 399 h3"/>
</g>
<rect x="265.0" y="140.3" width="5.8" height="26.2" stroke="#ffffff" fill="none" stroke-width="1.1" />
<rect x="264.4" y="385.0" width="6.4" height="16.8" stroke="#ffffff" fill="none" stroke-width="1.1" />
<line x1="267.5" y1="402.0" x2="259.5" y2="420.0" stroke="#ffffff" stroke-width="0.9" />
<g stroke="#ffffff" stroke-width="1.15" fill="none">
<path d="M178.3 266 A81 81 0 0 0 178.3 410"/>
<path d="M253.2 266.5 A81 81 0 0 1 270.5 279"/>
<path d="M253.2 409.5 A81 81 0 0 0 265 401.5"/>
<path d="M180.2 254.3 V228 H251 V254.3"/>
<path d="M179 254.3 H252.5 M178.3 258 H253.2 M179.5 254.3 V258 M182 254.3 V258 M249.8 254.3 V258 M252.3 254.3 V258"/>
<path d="M197 257.5 L213 255.3 M218 255.3 L234 257.5 M213 254.3 V258 M218 254.3 V258"/>
<path d="M178.3 258 V408 M253.2 258 V408 M186 258 V392 M192.3 258 V406 M239 258 V406 M245 258 V392"/>
<path d="M180.2 244.7 H172 C160 244.7 152 255 143 262 C133 270 122 271 110.5 274"/>
<path d="M180.2 249 H173 C162 249 154 259 145 266 C135 273.5 124 275 111 278"/>
<path d="M178.3 260 H166 C156 260 150 266 141 270.5 C131 275.5 121 277.5 110.5 280.5"/>
<path d="M178.3 263.5 H166 C157 263.5 151 269 142 273 C132 278 122 280.5 111 283.5"/>
<path d="M178.3 267 H168 C158 267 152 272 143 276 C133 280.5 122 283 110.5 284.5"/>
<path d="M178.3 270.5 H175 M175 259.5 V271.5 H178.3 M110.5 273.5 L111.3 285"/>
<path d="M181.5 249 V252 H180.2"/>
<path d="M178.3 392 H192.3 M239 392 H253.2 M180 390 q4.5 -3 9 0 M242.5 390 q4.5 -3 9 0 M180 390 V392 M189 390 V392 M242.5 390 V392 M251.5 390 V392"/>
<path d="M181.5 392 V413 M187.5 392 V413 M243.5 392 V413 M249.5 392 V413"/>
<path d="M159 419.6 H259.5 M159 436.3 H262 M159 419.6 V436.3 M172 419.6 H178.3 V408 M253.2 408 V419.6"/>
<path d="M171 427 H188 M188 419.6 V432 Q188 436.3 192 436.3 M243 436.3 Q250 436.3 252 427 L248 419.6"/>
<path d="M192.3 406 H239 M190.5 403.5 H240.5"/>
<path d="M159.5 419.5 h10.5 v4 h-10.5 z M159.5 432 h10.5 v4.3 h-10.5 z M161 423.5 V432 M168.5 423.5 V432"/>
<path d="M233 424.5 H247 L245 428 H233 M236 430 H246 V432.5 H238"/>
</g>
<rect x="190.8" y="406.8" width="18.5" height="15.4" stroke="#ffffff" fill="url(#hat2)" stroke-width="1.0" />
<rect x="222.0" y="406.8" width="22.0" height="15.4" stroke="#ffffff" fill="url(#hat2)" stroke-width="1.0" />
<path d="M190.8 422.2 L209.3 422.2 L209.3 432.5 L194.0 432.5 L190.8 430.0 Z" stroke="#ffffff" fill="url(#hat)" stroke-width="1.0" />
<path d="M222.0 422.2 L240.0 422.2 L236.0 425.0 L232.0 425.0 L232.0 432.5 L222.0 432.5 Z" stroke="#ffffff" fill="url(#hat)" stroke-width="1.0" />
<rect x="192.0" y="432.8" width="50.0" height="3.2" stroke="none" fill="url(#hat)" stroke-width="0" />
<path d="M192.2 424.2 L197.5 425.2 L197.5 429.2 L192.2 430.2 Z" stroke="#ff2020" fill="#ff2020" stroke-width="0.5" />
<rect x="211.2" y="406.8" width="8.4" height="26.0" stroke="#ffffff" fill="#212830" stroke-width="1.1" />
<g stroke="#22d0d8" stroke-width="1" fill="none">
<path d="M215.4 211 V460" stroke-dasharray="13 1.8 2 1.8"/>
<path d="M213.6 406 V436 M217.2 406 V436"/>
<path d="M184.5 386 V423 M246.5 386 V423 M164.7 412 V442"/>
</g>
<text x="193.0" y="403.2" font-size="4" fill="#ffffff" text-anchor="start" >▫▫</text>
<g stroke="#ffffff" stroke-width="1.15" fill="none">
<path d="M133 51.9 H146.4"/>
<path d="M146.4 51.9 L217.7 266"/>
<path d="M181 51.9 H196"/>
<path d="M196 51.9 L296.4 241"/>
<path d="M211 51.9 H224"/>
<path d="M224 51.9 L299.5 234"/>
<path d="M230 51.9 H243"/>
<path d="M243 51.9 L306.5 220.5"/>
<path d="M250 51.9 H264"/>
<path d="M264 51.9 L308.5 218"/>
<path d="M271 51.9 H284"/>
<path d="M284 51.9 L316 199.5"/>
<path d="M290 51.9 H303"/>
<path d="M303 51.9 L318.5 196"/>
<path d="M362 51.9 H375.8"/>
<path d="M362 51.9 L354.5 126"/>
<path d="M380 51.9 H393"/>
<path d="M380 51.9 L365 126"/>
<path d="M393 51.9 H410"/>
<path d="M393 51.9 L374 129"/>
<path d="M411.6 51.9 H426.5"/>
<path d="M411.6 51.9 L376.7 137.8"/>
<path d="M428 51.9 H444.7"/>
<path d="M428 51.9 L383.9 152"/>
<path d="M449.7 51.9 H464.6"/>
<path d="M449.7 51.9 L386 159.7"/>
<path d="M472.9 51.9 H488.5"/>
<path d="M472.9 51.9 L392.6 171.7"/>
<path d="M499.4 51.9 H514.3"/>
<path d="M499.4 51.9 L394.8 180.4"/>
<path d="M505.6 128.8 H520"/>
<path d="M505.6 128.8 L432 181.3"/>
<path d="M505.6 170.5 H520"/>
<path d="M505.6 170.5 L435.5 207"/>
<path d="M505.6 208 H520"/>
<path d="M505.6 208 L437.8 231"/>
<path d="M505.6 236.4 H520"/>
<path d="M505.6 236.4 L440.7 250.6"/>
<path d="M505.6 257.5 H520"/>
<path d="M505.6 257.5 L443.5 268"/>
<path d="M505.6 286.6 H520"/>
<path d="M505.6 286.6 L445.8 296.4"/>
<path d="M505.6 308.3 H520"/>
<path d="M505.6 308.3 L448 317"/>
<path d="M505.6 325.6 H520"/>
<path d="M505.6 325.6 L417 400.7"/>
<path d="M505.6 352.2 H520"/>
<path d="M505.6 352.2 L423 404"/>
<path d="M505.6 377.8 H520"/>
<path d="M505.6 377.8 L411.4 412"/>
<path d="M505.6 399 H520"/>
<path d="M505.6 399 L449 418"/>
<path d="M505.6 416.8 H520"/>
<path d="M505.6 416.8 L456 419.5"/>
<path d="M505 505.6 H520"/>
<path d="M505 505.6 L455 435"/>
<path d="M424 505.6 H439.4"/>
<path d="M424 505.6 L372 431"/>
<path d="M312 505.6 H321.5"/>
<path d="M321.5 505.6 L358 432"/>
<path d="M255 505.6 H269"/>
<path d="M269 505.6 L295 428.5"/>
<path d="M213 505.6 H227.5"/>
<path d="M227.5 505.6 L267 402"/>
<path d="M165 505.6 H179.5"/>
<path d="M179.5 505.6 L207 431"/>
<path d="M124.3 505.6 H137.5"/>
<path d="M137.5 505.6 L182 413"/>
<path d="M631.5 128.2 H645"/>
<path d="M645 128.2 L763.7 309.4"/>
<path d="M631.5 208 H645"/>
<path d="M645 208 L740.5 319"/>
<path d="M630.5 286 H645"/>
<path d="M645 286 L732 330"/>
<path d="M631.5 371.3 H645"/>
<path d="M645 371.3 L735 349.4"/>
<path d="M630.5 416.5 H645"/>
<path d="M645 416.5 L783.7 341.7"/>
<path d="M630.5 505.6 H645"/>
<path d="M645 505.6 L773.8 357"/>
<path d="M685 505.6 H699.4"/>
<path d="M699.4 505.6 L788.4 394.5"/>
<path d="M805.6 505.6 H819.3"/>
<path d="M805.6 505.6 L776 415"/>
<path d="M889.6 505.6 H903.3"/>
<path d="M889.6 505.6 L806 365.8"/>
<path d="M974.5 505.6 H988.5"/>
<path d="M974.5 505.6 L910 427.4"/>
</g>
<g fill="#ffffff" font-size="14" text-anchor="middle" style="font-family:'Liberation Sans',sans-serif">
<text x="138.2" y="50.7" textLength="4.4" lengthAdjust="spacingAndGlyphs">1</text>
<text x="187.0" y="50.7" textLength="6.7" lengthAdjust="spacingAndGlyphs">2</text>
<text x="216.0" y="50.7" textLength="6.7" lengthAdjust="spacingAndGlyphs">3</text>
<text x="235.0" y="50.7" textLength="6.7" lengthAdjust="spacingAndGlyphs">4</text>
<text x="255.5" y="50.7" textLength="6.7" lengthAdjust="spacingAndGlyphs">5</text>
<text x="276.0" y="50.7" textLength="6.7" lengthAdjust="spacingAndGlyphs">6</text>
<text x="295.0" y="50.7" textLength="6.7" lengthAdjust="spacingAndGlyphs">7</text>
<text x="368.9" y="50.7" textLength="6.7" lengthAdjust="spacingAndGlyphs">8</text>
<text x="386.5" y="50.7" textLength="6.7" lengthAdjust="spacingAndGlyphs">9</text>
<text x="401.5" y="50.7" textLength="13.4" lengthAdjust="spacingAndGlyphs">10</text>
<text x="419.1" y="50.7" textLength="13.4" lengthAdjust="spacingAndGlyphs">11</text>
<text x="436.4" y="50.7" textLength="13.4" lengthAdjust="spacingAndGlyphs">12</text>
<text x="457.1" y="50.7" textLength="13.4" lengthAdjust="spacingAndGlyphs">13</text>
<text x="480.7" y="50.7" textLength="13.4" lengthAdjust="spacingAndGlyphs">14</text>
<text x="506.8" y="50.7" textLength="13.4" lengthAdjust="spacingAndGlyphs">15</text>
<text x="512.8" y="127.6" textLength="13.4" lengthAdjust="spacingAndGlyphs">16</text>
<text x="512.8" y="169.3" textLength="13.4" lengthAdjust="spacingAndGlyphs">17</text>
<text x="512.8" y="206.8" textLength="13.4" lengthAdjust="spacingAndGlyphs">18</text>
<text x="512.8" y="235.2" textLength="13.4" lengthAdjust="spacingAndGlyphs">19</text>
<text x="512.8" y="256.3" textLength="13.4" lengthAdjust="spacingAndGlyphs">20</text>
<text x="512.8" y="285.4" textLength="13.4" lengthAdjust="spacingAndGlyphs">21</text>
<text x="512.8" y="307.1" textLength="13.4" lengthAdjust="spacingAndGlyphs">22</text>
<text x="512.8" y="324.4" textLength="13.4" lengthAdjust="spacingAndGlyphs">23</text>
<text x="512.8" y="351.0" textLength="13.4" lengthAdjust="spacingAndGlyphs">24</text>
<text x="512.8" y="376.6" textLength="13.4" lengthAdjust="spacingAndGlyphs">25</text>
<text x="512.8" y="397.8" textLength="13.4" lengthAdjust="spacingAndGlyphs">26</text>
<text x="512.8" y="415.6" textLength="13.4" lengthAdjust="spacingAndGlyphs">27</text>
<text x="512.5" y="504.4" textLength="13.4" lengthAdjust="spacingAndGlyphs">28</text>
<text x="431.7" y="504.4" textLength="13.4" lengthAdjust="spacingAndGlyphs">29</text>
<text x="316.8" y="504.4" textLength="13.4" lengthAdjust="spacingAndGlyphs">30</text>
<text x="262.0" y="504.4" textLength="13.4" lengthAdjust="spacingAndGlyphs">31</text>
<text x="220.2" y="504.4" textLength="13.4" lengthAdjust="spacingAndGlyphs">32</text>
<text x="172.2" y="504.4" textLength="13.4" lengthAdjust="spacingAndGlyphs">33</text>
<text x="130.9" y="504.4" textLength="13.4" lengthAdjust="spacingAndGlyphs">34</text>
<text x="638.2" y="127.0" textLength="13.4" lengthAdjust="spacingAndGlyphs">35</text>
<text x="638.2" y="206.8" textLength="13.4" lengthAdjust="spacingAndGlyphs">36</text>
<text x="637.8" y="284.8" textLength="13.4" lengthAdjust="spacingAndGlyphs">37</text>
<text x="638.2" y="370.1" textLength="13.4" lengthAdjust="spacingAndGlyphs">38</text>
<text x="637.8" y="415.3" textLength="13.4" lengthAdjust="spacingAndGlyphs">39</text>
<text x="637.8" y="504.4" textLength="13.4" lengthAdjust="spacingAndGlyphs">40</text>
<text x="692.2" y="504.4" textLength="13.4" lengthAdjust="spacingAndGlyphs">41</text>
<text x="812.5" y="504.4" textLength="13.4" lengthAdjust="spacingAndGlyphs">42</text>
<text x="896.5" y="504.4" textLength="13.4" lengthAdjust="spacingAndGlyphs">43</text>
<text x="981.5" y="504.4" textLength="13.4" lengthAdjust="spacingAndGlyphs">44</text>
</g>
<g stroke="#ffffff" stroke-width="1.15" fill="none">
<path d="M772.8 305 V125.2 H952.9 V228 M772.8 128.7 H952.9"/>
<rect x="849" y="140" width="27" height="26.5"/>
<rect x="849" y="385.5" width="27" height="26.3"/>
<path d="M881.4 254.7 V228 H952 V254.7 M880.3 254.7 H953 M879.5 258 H953.4 M893 254.7 V258 M896 254.7 V258 M935 254.7 V258 M938 254.7 V258"/>
<path d="M879.5 258 V394.6 M887 258 V392 M893.2 258 V392 M939 258 V392 M945.8 258 V392 M953.4 258 V394.6"/>
<path d="M879.5 394.6 H893.2 M939 394.6 H953.4 M880 392 q6 -4 13 0 M939.5 392 q6 -4 13 0"/>
<path d="M879.5 403 H954 V416 M879.5 403 V416 M881.5 397 V403 M952 397 V403"/>
<path d="M907 251.5 A9.3 9.3 0 0 1 925.6 251.5 H920 V247 M907 251.5 H912.5 V247 M914.5 246 V284 M918 246 V284 M913.5 284 H919 M913.5 272 V284 M919 272 V284"/>
<circle cx="916.3" cy="266" r="5.2"/><circle cx="916.3" cy="266" r="3.3"/>
<path d="M765.2 416 H960.8 V436.4 H765.2 Z M765.2 419 H955 M765.2 426.6 H960.8 M955 412 V419 M957.5 412 H960.8 V416 M955 412 H957.5"/>
<path d="M764.7 305 H798 V360.5 H783.4 L769.5 342 V315 M764.7 305 V360.7 M764.7 315 H769.5"/>
<path d="M765.7 303.5 H770 V305 M765.7 303.5 V305 M798 307.6 H802.3 V314.3 H798 M798 349.3 H802.3 V355.5 H798 M789 305 V310 H798 M789 355 H798 M789 355 V360.5"/>
<path d="M766 309 H782 a2.5 2.5 0 0 1 0 5 H766 M766 350 H782"/>
<path d="M764.7 364.2 H818.8 V366.6 H764.7 Z M773.4 366.6 V416 M775.8 366.6 V416 M781.8 366.6 V416 M801.5 366.6 V416"/>
<path d="M776 366.6 h6 v4.5 h-6 z M801.5 358 h7 v14 h-7 z M800 361 h10 v8 h-10 z"/>
<path d="M773.5 413 h8 v3 h-8 z M802 413 h8.5 v3 h-8.5 z M773 418 h9 v12 h-9 z M808 421 h12 v11 h-12 z M810 432 h8 v3 h-8 z M905 419 h13 v12 h-13 z"/>
<path d="M707 313.9 H758.4 M707 348.6 H758.4"/>
<path d="M723 316.5 H745 L752 320 H760 M723 346.5 H745 L752 343 H760 M725 316.5 V346.5 M727 322.5 H737 Q734 331.2 737 340 H727 M737 322.5 L744 326 H760 M737 340 L744 336.5 H760"/>
</g>
<rect x="704.3" y="250.0" width="2.8" height="162.3" stroke="#f6d4d4" fill="#6a2a2e" stroke-width="0.9" />
<rect x="758.6" y="250.0" width="3.2" height="162.3" stroke="#f6d4d4" fill="#6a2a2e" stroke-width="0.9" />
<path d="M727.5 318.2 L744.0 318.2 L748.0 321.5 L738.0 321.8 L727.5 321.8 Z" stroke="#e03030" fill="#c03030" stroke-width="0.5" />
<path d="M727.5 344.8 L744.0 344.8 L748.0 341.5 L738.0 341.2 L727.5 341.2 Z" stroke="#e03030" fill="#c03030" stroke-width="0.5" />
<path d="M740.0 324.0 L752.0 322.0 L752.0 325.5 L744.0 327.0 Z" stroke="#e03030" fill="#c03030" stroke-width="0.4" />
<path d="M740.0 339.0 L752.0 341.0 L752.0 337.5 L744.0 336.0 Z" stroke="#e03030" fill="#c03030" stroke-width="0.4" />
<g stroke="#22d0d8" stroke-width="1" fill="none">
<path d="M862.5 108 V465" stroke-dasharray="13 1.8 2 1.8"/>
<path d="M916.5 211 V465" stroke-dasharray="13 1.8 2 1.8"/>
<path d="M791.3 340 V465" stroke-dasharray="13 1.8 2 1.8"/>
<path d="M680 331.2 H818.5" stroke-dasharray="13 1.8 2 1.8"/>
<path d="M763 311.5 H783 M766 350 H784 M778.2 350 V372 M804.9 354 V374 M776.8 409 V431 M779.5 409 V431 M814.2 413 V441 M806.3 412 V422 M831.3 415 V427 M884.5 386 V424 M946.3 386 V424 M911 412 V440 M723 318 H742 M723 345 H742 M741 320.5 H757 M741 342 H757 M953 410 V418"/>
<path d="M862.5 413 V418" stroke-width="3"/>
</g>
<g stroke="#22e022" stroke-width="1.15" fill="none">
<path d="M680 331.2 H686.5 M683.3 331.2 V436 M680 436.2 H765 M722 322 V342 M791 464.4 H917"/>
</g>
<rect x="680.8" y="381.5" width="4.8" height="4.4" fill="#22e022"/>
<rect x="705.8" y="338.2" width="14.2" height="3.8" fill="#22e022"/>
<rect x="824.8" y="457.6" width="4.6" height="4.2" fill="#22e022"/>
<rect x="886.5" y="457.6" width="4.6" height="4.2" fill="#22e022"/>
<path d="M683.3 331.5 L681.8 336.5 L684.8 336.5 Z" stroke="#22e022" fill="#22e022" stroke-width="0.3" />
<path d="M683.3 436.0 L681.8 431.0 L684.8 431.0 Z" stroke="#22e022" fill="#22e022" stroke-width="0.3" />
<path d="M791.0 464.4 L796.0 463.0 L796.0 465.8 Z" stroke="#22e022" fill="#22e022" stroke-width="0.3" />
<path d="M917.0 464.4 L912.0 463.0 L912.0 465.8 Z" stroke="#22e022" fill="#22e022" stroke-width="0.3" />
<path d="M359.6 712.0 A86.5 86.5 0 0 1 359.6 885.0 Z" fill="#3a1a1f" stroke="none"/>
<path d="M359.6 713.9 A84.6 84.6 0 0 1 359.6 883.1" fill="none" stroke="#e02424" stroke-width="1.9" stroke-dasharray="2.8 1.3"/>
<path d="M359.6 715.4 A83.1 83.1 0 0 1 359.6 881.6" fill="none" stroke="#f0c0c0" stroke-width="0.6"/>
<path d="M359.6 716.5 A82.0 82.0 0 0 1 359.6 880.5" fill="none" stroke="#f0c0c0" stroke-width="0.6"/>
<path d="M359.6 717.7 A80.8 80.8 0 0 1 359.6 879.3" fill="none" stroke="#e02424" stroke-width="1.9" stroke-dasharray="2.8 1.3"/>
<path d="M359.6 719.2 A79.3 79.3 0 0 1 359.6 877.8" fill="none" stroke="#f0c0c0" stroke-width="0.6"/>
<path d="M359.6 720.3 A78.2 78.2 0 0 1 359.6 876.7" fill="none" stroke="#f0c0c0" stroke-width="0.6"/>
<path d="M359.6 721.5 A77 77 0 0 1 359.6 875.5" fill="none" stroke="#e02424" stroke-width="1.9" stroke-dasharray="2.8 1.3"/>
<path d="M359.6 723.0 A75.5 75.5 0 0 1 359.6 874.0" fill="none" stroke="#f0c0c0" stroke-width="0.6"/>
<path d="M359.6 724.1 A74.4 74.4 0 0 1 359.6 872.9" fill="none" stroke="#f0c0c0" stroke-width="0.6"/>
<path d="M359.6 725.3 A73.2 73.2 0 0 1 359.6 871.7" fill="none" stroke="#e02424" stroke-width="1.9" stroke-dasharray="2.8 1.3"/>
<path d="M359.6 726.8 A71.7 71.7 0 0 1 359.6 870.2" fill="none" stroke="#f0c0c0" stroke-width="0.6"/>
<path d="M359.6 727.9 A70.60000000000001 70.60000000000001 0 0 1 359.6 869.1" fill="none" stroke="#f0c0c0" stroke-width="0.6"/>
<path d="M359.6 729.1 A69.4 69.4 0 0 1 359.6 867.9" fill="none" stroke="#e02424" stroke-width="1.9" stroke-dasharray="2.8 1.3"/>
<path d="M359.6 730.6 A67.9 67.9 0 0 1 359.6 866.4" fill="none" stroke="#f0c0c0" stroke-width="0.6"/>
<path d="M359.6 731.7 A66.80000000000001 66.80000000000001 0 0 1 359.6 865.3" fill="none" stroke="#f0c0c0" stroke-width="0.6"/>
<path d="M359.6 733.2 A65.3 65.3 0 0 1 359.6 863.8 Z" fill="url(#hat3)" stroke="#ffffff" stroke-width="0.8"/>
<g stroke="#ffffff" stroke-width="1.15" fill="none">
<circle cx="359.6" cy="798.5" r="98"/><circle cx="359.6" cy="798.5" r="88"/>
<path d="M359.6 780.2 A18.3 18.3 0 0 1 359.6 816.8" stroke="#f4a8a8" stroke-dasharray="2 1.2"/>
<path d="M346 701.5 H171.6 V896.7 H349"/>
<path d="M134 640.3 H297 V642.8 H134 Z M134 694.6 H297 V698 H134 Z M197.2 642.8 V694.6 M233.5 642.8 V694.6"/>
<path d="M184.2 700 H247 V753.7 H184.2 Z M188 704 H243 M188 704 V738 L193 746 H238 L243 738 V704 M191 704 V733 M240 704 V733 M191 733 H240"/>
<path d="M190.5 714 h5.5 v11 h-5.5 z M235 714 h5.5 v11 h-5.5 z M192 700.5 h6 v2 h-6 z M233 700.5 h6 v2 h-6 z M213.5 698 h4 v4 h-4 z"/>
<circle cx="197.3" cy="740" r="3.3"/><circle cx="233.5" cy="740" r="3.3"/>
<path d="M171.6 743.1999999999999 H164.4 A6.2 6.2 0 0 0 164.4 755.6 H171.6"/><circle cx="164.8" cy="749.4" r="3.6"/>
<path d="M171.6 838.8 H164.4 A6.2 6.2 0 0 0 164.4 851.2 H171.6"/><circle cx="164.8" cy="845" r="3.6"/>
<path d="M110 849.2 H176 M110 851.8 H171.6 M112 854.6 H176 M110 849.2 L112 854.6 M172 846.5 h5 v10 h-5 z"/>
<path d="M178 814.3 H252.8 V889.2 H178 Z"/><circle cx="215.4" cy="851.7" r="35.5"/>
<path d="M178 827 L190.5 814.3 M240.3 814.3 L252.8 827 M178 876.5 L190.5 889.2 M240.3 889.2 L252.8 876.5"/>
<circle cx="184.8" cy="821" r="4.6"/><circle cx="184.8" cy="821" r="2.6"/>
<circle cx="245.8" cy="821" r="4.6"/><circle cx="245.8" cy="821" r="2.6"/>
<circle cx="184.8" cy="882.5" r="4.6"/><circle cx="184.8" cy="882.5" r="2.6"/>
<circle cx="245.8" cy="882.5" r="4.6"/><circle cx="245.8" cy="882.5" r="2.6"/>
<circle cx="194.5" cy="818" r="1.3"/>
<circle cx="236.5" cy="818" r="1.3"/>
<circle cx="194.5" cy="885.5" r="1.3"/>
<circle cx="236.5" cy="885.5" r="1.3"/>
<circle cx="181.5" cy="830.5" r="1.3"/>
<circle cx="249.3" cy="830.5" r="1.3"/>
<circle cx="181.5" cy="873" r="1.3"/>
<circle cx="249.3" cy="873" r="1.3"/>
<path d="M353.3 781.6 L209.1 834.8 A18 18 0 0 0 221.7 868.6 L365.9 815.4"/>
<path d="M353.3 781.6 A18 18 0 0 1 359.6 780.2"/>
<circle cx="440" cy="729.4" r="4.6"/>
<path d="M433.5 731.9 A6.8 6.8 0 1 1 443 735.6"/>
<path d="M433.5 731.9 L431 735.4 M443 735.6 L441 740.9"/>
<circle cx="440" cy="867.3" r="4.6"/>
<path d="M433.5 864.8 A6.8 6.8 0 1 0 443 861.0999999999999"/>
<path d="M433.5 864.8 L431 861.3 M443 861.0999999999999 L441 855.8"/>
</g>
<g stroke="#22d0d8" stroke-width="1" fill="none">
<path d="M215.4 617 V961" stroke-dasharray="13 1.8 2 1.8"/><path d="M359.6 617 V961" stroke-dasharray="13 1.8 2 1.8"/>
<path d="M255 798.5 H359.6" stroke-dasharray="13 1.8 2 1.8"/><path d="M425.1 798.5 H464"/><path d="M359.6 798.5 H424.6" stroke="#e89090" stroke-width="0.7" stroke-dasharray="5 1 1 1"/><path d="M176.5 852.2 H260" stroke-dasharray="13 1.8 2 1.8"/>
<circle cx="359.6" cy="798.5" r="92.6" stroke-dasharray="10 2 2 2"/>
<path d="M359.6 732.7 A65.8 65.8 0 0 1 359.6 864.3" stroke-dasharray="8 2 2 2"/>
<circle cx="452.2" cy="798.5" r="2.3"/>
<circle cx="446.6" cy="830.2" r="2.3"/>
<circle cx="430.5" cy="858.0" r="2.3"/>
<circle cx="405.9" cy="878.7" r="2.3"/>
<circle cx="375.7" cy="889.7" r="2.3"/>
<circle cx="343.5" cy="889.7" r="2.3"/>
<circle cx="313.3" cy="878.7" r="2.3"/>
<circle cx="288.7" cy="858.0" r="2.3"/>
<circle cx="272.6" cy="830.2" r="2.3"/>
<circle cx="267.0" cy="798.5" r="2.3"/>
<circle cx="272.6" cy="766.8" r="2.3"/>
<circle cx="288.7" cy="739.0" r="2.3"/>
<circle cx="313.3" cy="718.3" r="2.3"/>
<circle cx="343.5" cy="707.3" r="2.3"/>
<circle cx="375.7" cy="707.3" r="2.3"/>
<circle cx="405.9" cy="718.3" r="2.3"/>
<circle cx="430.5" cy="739.0" r="2.3"/>
<circle cx="446.6" cy="766.8" r="2.3"/>
<circle cx="384.8" cy="737.7" r="1.4"/>
<circle cx="406.1" cy="752.0" r="1.4"/>
<circle cx="420.4" cy="773.3" r="1.4"/>
<circle cx="425.4" cy="798.5" r="1.4"/>
<circle cx="420.4" cy="823.7" r="1.4"/>
<circle cx="406.1" cy="845.0" r="1.4"/>
<circle cx="384.8" cy="859.3" r="1.4"/>
<circle cx="359.6" cy="864.3" r="1.4"/>
<path d="M192.3 740 H202.3 M197.3 735 V745"/>
<path d="M228.5 740 H238.5 M233.5 735 V745"/>
<path d="M159.8 749.4 H169.8 M164.8 744.4 V754.4"/>
<path d="M159.8 845 H169.8 M164.8 840 V850"/>
<path d="M179.8 821 H189.8 M184.8 816 V826"/>
<path d="M240.8 821 H250.8 M245.8 816 V826"/>
<path d="M179.8 882.5 H189.8 M184.8 877.5 V887.5"/>
<path d="M240.8 882.5 H250.8 M245.8 877.5 V887.5"/>
<path d="M440 725.1 L444.3 729.4 L440 733.6999999999999 L435.7 729.4 Z M437 726.4 L443 732.4 M443 726.4 L437 732.4"/>
<path d="M440 863.0 L444.3 867.3 L440 871.5999999999999 L435.7 867.3 Z M437 864.3 L443 870.3 M443 864.3 L437 870.3"/>
</g>
<circle cx="452.2" cy="798.5" r="3.4" stroke="#ffffff" stroke-width="0.6" fill="none"/>
<circle cx="446.6" cy="830.2" r="3.4" stroke="#ffffff" stroke-width="0.6" fill="none"/>
<circle cx="430.5" cy="858.0" r="3.4" stroke="#ffffff" stroke-width="0.6" fill="none"/>
<circle cx="405.9" cy="878.7" r="3.4" stroke="#ffffff" stroke-width="0.6" fill="none"/>
<circle cx="375.7" cy="889.7" r="3.4" stroke="#ffffff" stroke-width="0.6" fill="none"/>
<circle cx="343.5" cy="889.7" r="3.4" stroke="#ffffff" stroke-width="0.6" fill="none"/>
<circle cx="313.3" cy="878.7" r="3.4" stroke="#ffffff" stroke-width="0.6" fill="none"/>
<circle cx="288.7" cy="858.0" r="3.4" stroke="#ffffff" stroke-width="0.6" fill="none"/>
<circle cx="272.6" cy="830.2" r="3.4" stroke="#ffffff" stroke-width="0.6" fill="none"/>
<circle cx="267.0" cy="798.5" r="3.4" stroke="#ffffff" stroke-width="0.6" fill="none"/>
<circle cx="272.6" cy="766.8" r="3.4" stroke="#ffffff" stroke-width="0.6" fill="none"/>
<circle cx="288.7" cy="739.0" r="3.4" stroke="#ffffff" stroke-width="0.6" fill="none"/>
<circle cx="313.3" cy="718.3" r="3.4" stroke="#ffffff" stroke-width="0.6" fill="none"/>
<circle cx="343.5" cy="707.3" r="3.4" stroke="#ffffff" stroke-width="0.6" fill="none"/>
<circle cx="375.7" cy="707.3" r="3.4" stroke="#ffffff" stroke-width="0.6" fill="none"/>
<circle cx="405.9" cy="718.3" r="3.4" stroke="#ffffff" stroke-width="0.6" fill="none"/>
<circle cx="430.5" cy="739.0" r="3.4" stroke="#ffffff" stroke-width="0.6" fill="none"/>
<circle cx="446.6" cy="766.8" r="3.4" stroke="#ffffff" stroke-width="0.6" fill="none"/>
<g stroke="#78b020" stroke-width="1.2" fill="none">
<path d="M378.9 756.3 L392.6 732.3"/>
<path d="M398.3 765.5 L420 751.3"/>
<path d="M406.8 783.8 L436 779.2"/>
<path d="M406.8 809 L436 820"/>
<path d="M397.2 822.2 L427 847.9"/>
<path d="M384.6 833.7 L405.2 873"/>
<path d="M435.1 779.0 A78 78 0 0 1 426.5 838.7" stroke-width="1.8"/>
<path d="M435.4 754.8 A87.5 87.5 0 0 1 405.3 873.1" stroke-width="1.8"/>
</g>
<g stroke="#30ee20" stroke-width="5.4" fill="none">
<path d="M368.6 771.2 L378.9 756.3"/>
<path d="M383.5 777 L398.3 765.5"/>
<path d="M389.2 788.8 L406.8 783.8"/>
<path d="M389.2 803.7 L406.8 809"/>
<path d="M381.2 813.5 L397.2 822.2"/>
<path d="M373.2 819.3 L384.6 833.7"/>
</g>
<g stroke="#30ee20" stroke-width="1.15" fill="none">
<path d="M215.4 623 H359.6 M215.4 616.5 V626 M359.6 616.5 V626 M103.8 701.3 V896.7 M102 701.3 H172 M102 896.8 H172"/>
</g>
<rect x="284.3" y="617.6" width="5" height="4.2" fill="#30ee20"/>
<rect x="101.2" y="795.4" width="5.2" height="4.4" fill="#30ee20"/>
<path d="M215.4 623.0 L220.4 621.6 L220.4 624.4 Z" stroke="#30ee20" fill="#30ee20" stroke-width="0.3" />
<path d="M359.6 623.0 L354.6 621.6 L354.6 624.4 Z" stroke="#30ee20" fill="#30ee20" stroke-width="0.3" />
<path d="M103.8 701.5 L102.3 706.5 L105.3 706.5 Z" stroke="#30ee20" fill="#30ee20" stroke-width="0.3" />
<path d="M103.8 896.5 L102.3 891.5 L105.3 891.5 Z" stroke="#30ee20" fill="#30ee20" stroke-width="0.3" />
<g stroke="#ffffff" stroke-width="0.8" fill="#ffffff"><circle cx="354.8" cy="798.5" r="1.2"/><circle cx="359.6" cy="794.0" r="0.9"/><circle cx="359.6" cy="803.0" r="0.9"/></g>
<rect x="281" y="777" width="1" height="1" fill="#30ee20"/>
<rect x="300" y="843" width="1" height="1" fill="#30ee20"/>
<rect x="317" y="845" width="1" height="1" fill="#30ee20"/>
<rect x="327" y="871" width="1" height="1" fill="#30ee20"/>
<rect x="291" y="748" width="1" height="1" fill="#30ee20"/>
<rect x="1362" y="330" width="3.2" height="640" fill="#fbf63a"/>
<g font-size="17.5" font-weight="bold" fill="#82222a" stroke="#bcaaac" stroke-width="1.9" paint-order="stroke" stroke-linejoin="round" opacity="0.88" style="font-family:'Liberation Sans',sans-serif">
<text transform="translate(201.5 174) rotate(-40.9)" x="0" y="0" textLength="175" lengthAdjust="spacing">www.56doc.com</text>
<text transform="translate(1049 186) rotate(-40.9)" x="0" y="0" textLength="175" lengthAdjust="spacing">www.56doc.com</text>
<text transform="translate(434.5 433) rotate(-40.9)" x="0" y="0" textLength="175" lengthAdjust="spacing">www.56doc.com</text>
<text transform="translate(789.5 582.5) rotate(-40.9)" x="0" y="0" textLength="175" lengthAdjust="spacing">www.56doc.com</text>
<text transform="translate(201.5 882.5) rotate(-40.9)" x="0" y="0" textLength="175" lengthAdjust="spacing">www.56doc.com</text>
<text transform="translate(1016 894.7) rotate(-40.9)" x="0" y="0" textLength="175" lengthAdjust="spacing">www.56doc.com</text>
</g>
</svg>
<div id="hdr"><span>Autodesk AutoCAD 2016    <b style="font-weight:normal;font-size:11.9px">总装配图</b>.DWG</span></div>
</body></html>
